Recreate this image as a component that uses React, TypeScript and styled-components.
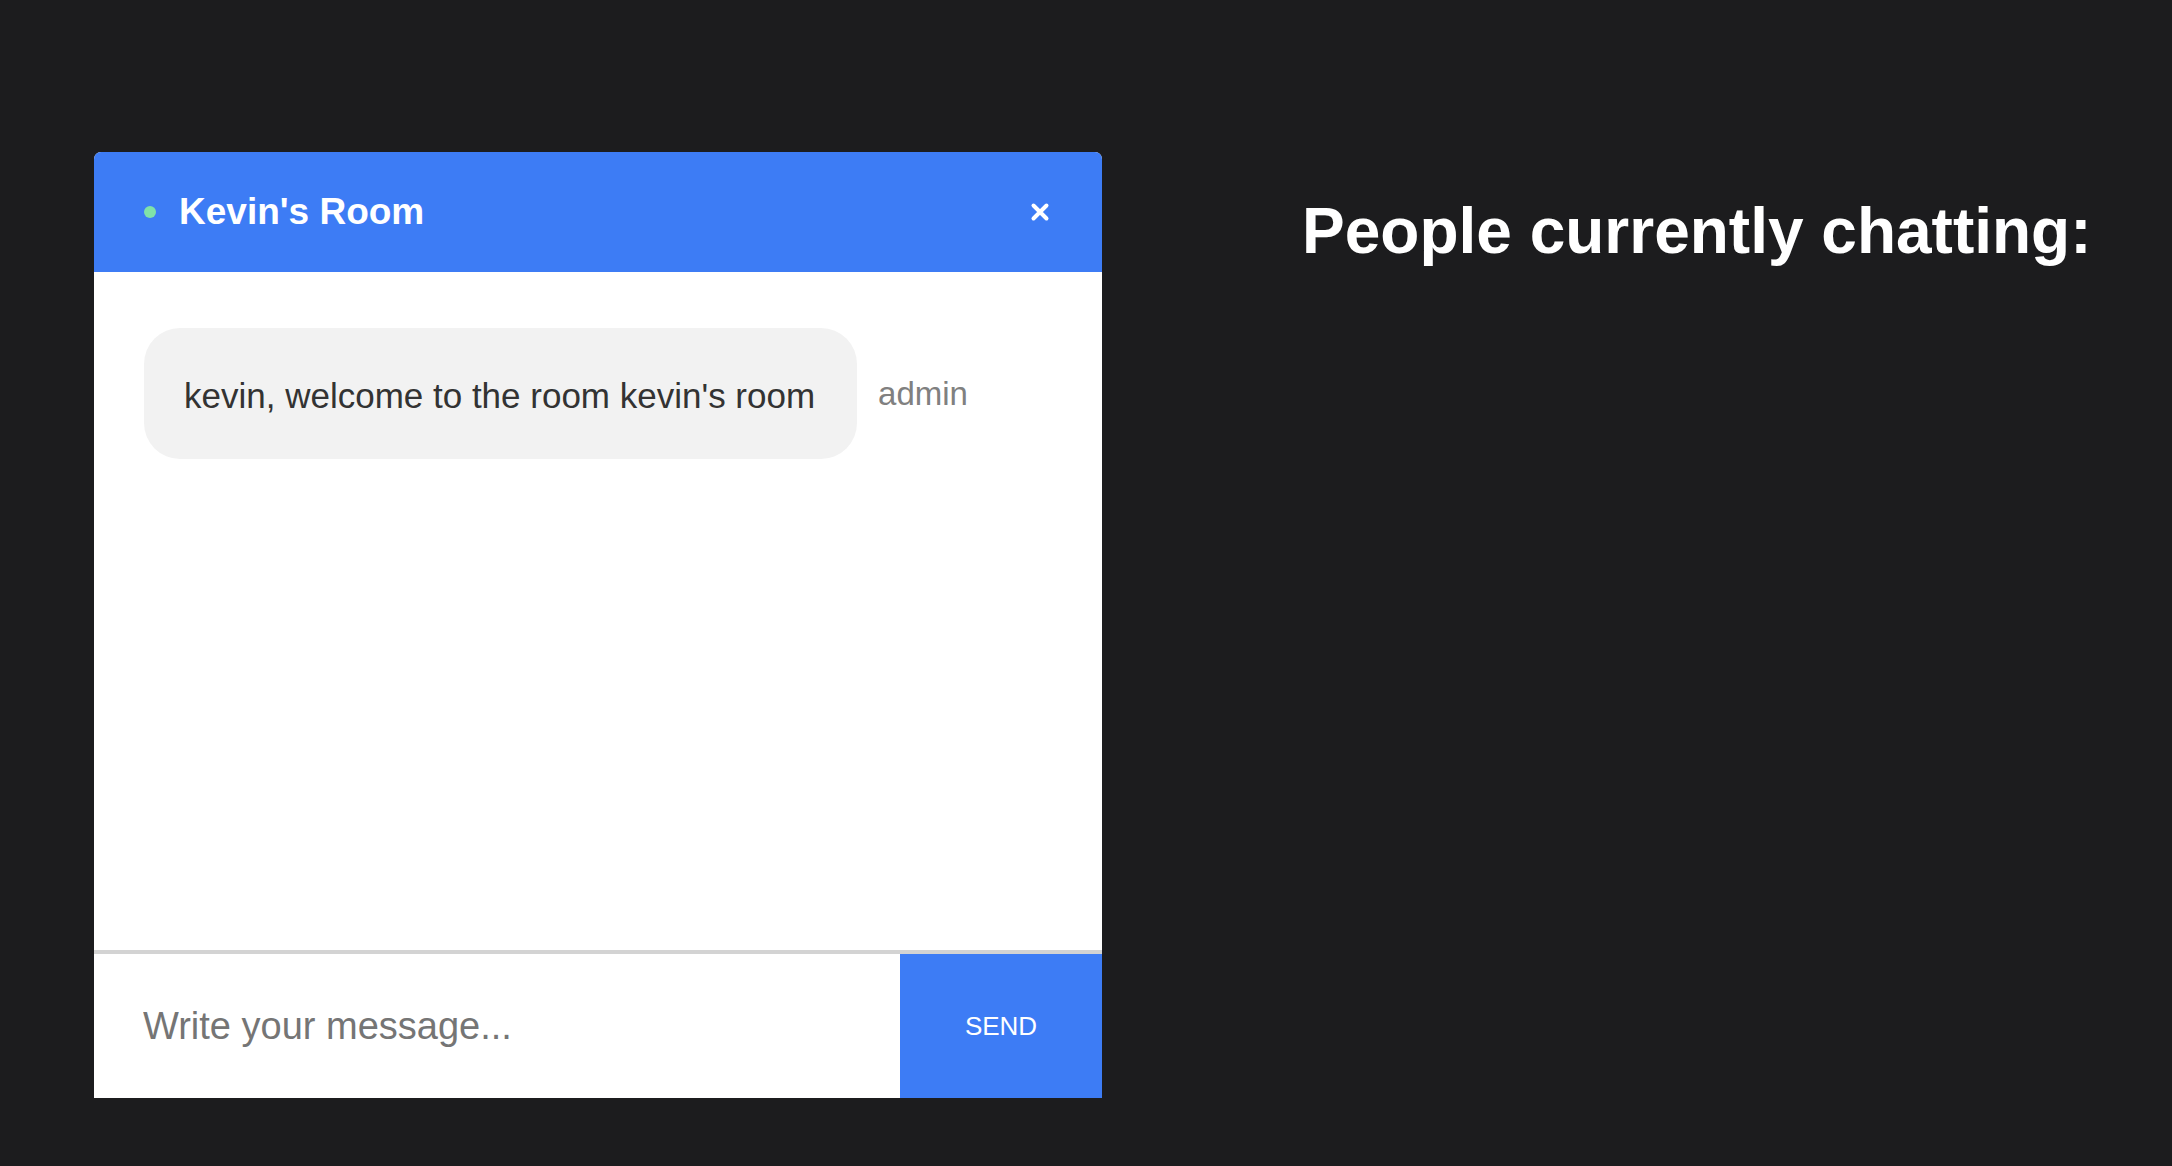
import React from "react";
import styled, { createGlobalStyle } from "styled-components";

const GlobalStyle = createGlobalStyle`
  html, body {
    margin: 0;
    padding: 0;
    background: #1c1c1e;
  }
  body {
    font-family: "Liberation Sans", Arial, Helvetica, sans-serif;
  }
  * { box-sizing: border-box; }
`;

const Page = styled.div`
  display: flex;
  align-items: flex-start;
  gap: 200px;
  padding: 152px 0 0 94px;
  min-height: 1166px;
`;

const ChatBox = styled.section`
  width: 1008px;
  height: 946px;
  display: flex;
  flex-direction: column;
  background: #ffffff;
  border-radius: 7px 7px 0 0;
  overflow: hidden;
`;

const Header = styled.header`
  height: 120px;
  flex: none;
  display: flex;
  align-items: center;
  padding: 0 52px 0 50px;
  background: #3d7cf5;
  color: #ffffff;
`;

const StatusDot = styled.span`
  width: 12px;
  height: 12px;
  border-radius: 50%;
  background: #80e2a8;
  flex: none;
`;

const Title = styled.h2`
  margin: 0 0 0 23px;
  font-size: 37px;
  font-weight: 700;
  line-height: 1.2;
  flex: 1;
`;

const CloseButton = styled.button`
  width: 20px;
  height: 20px;
  padding: 0;
  border: none;
  background: transparent;
  display: flex;
  align-items: center;
  justify-content: center;
  cursor: pointer;
`;

const Messages = styled.div`
  flex: 1;
  padding: 56px 50px;
  background: #ffffff;
`;

const MessageRow = styled.div`
  display: flex;
  align-items: center;
  gap: 21px;
`;

const Bubble = styled.div`
  height: 131px;
  display: flex;
  align-items: center;
  padding: 5px 42px 0 40px;
  background: #f2f2f2;
  border-radius: 36px;
  color: #333333;
  font-size: 35px;
  white-space: nowrap;
`;

const Author = styled.span`
  color: #808080;
  font-size: 33px;
`;

const Composer = styled.form`
  height: 148px;
  flex: none;
  display: flex;
  border-top: 4px solid #d3d3d3;
  margin: 0;
`;

const MessageInput = styled.input`
  flex: 1;
  min-width: 0;
  border: none;
  outline: none;
  padding: 0 0 0 49px;
  font-family: "Liberation Sans", Arial, Helvetica, sans-serif;
  font-size: 38px;
  color: #333333;
  background: #ffffff;
  &::placeholder {
    color: #757575;
    opacity: 1;
  }
`;

const SendButton = styled.button`
  width: 202px;
  flex: none;
  border: none;
  background: #3d7cf5;
  color: #ffffff;
  font-family: "Liberation Sans", Arial, Helvetica, sans-serif;
  font-size: 26px;
  cursor: pointer;
`;

const Heading = styled.h1`
  margin: 42px 0 0;
  color: #ffffff;
  font-size: 64px;
  line-height: 74px;
  font-weight: 700;
  white-space: nowrap;
`;

const CloseIcon = () => (
  <svg width="20" height="20" viewBox="0 0 20 20" aria-hidden="true">
    <path
      d="M3.5 3.5 L16.5 16.5 M16.5 3.5 L3.5 16.5"
      stroke="#ffffff"
      strokeWidth="4"
      strokeLinecap="round"
      fill="none"
    />
  </svg>
);

export default function App() {
  return (
    <>
      <GlobalStyle />
      <Page>
        <ChatBox>
          <Header>
            <StatusDot />
            <Title>Kevin's Room</Title>
            <CloseButton type="button" aria-label="Close">
              <CloseIcon />
            </CloseButton>
          </Header>
          <Messages>
            <MessageRow>
              <Bubble>kevin, welcome to the room kevin's room</Bubble>
              <Author>admin</Author>
            </MessageRow>
          </Messages>
          <Composer onSubmit={(e) => e.preventDefault()}>
            <MessageInput placeholder="Write your message..." />
            <SendButton type="submit">SEND</SendButton>
          </Composer>
        </ChatBox>
        <Heading>People currently chatting:</Heading>
      </Page>
    </>
  );
}
